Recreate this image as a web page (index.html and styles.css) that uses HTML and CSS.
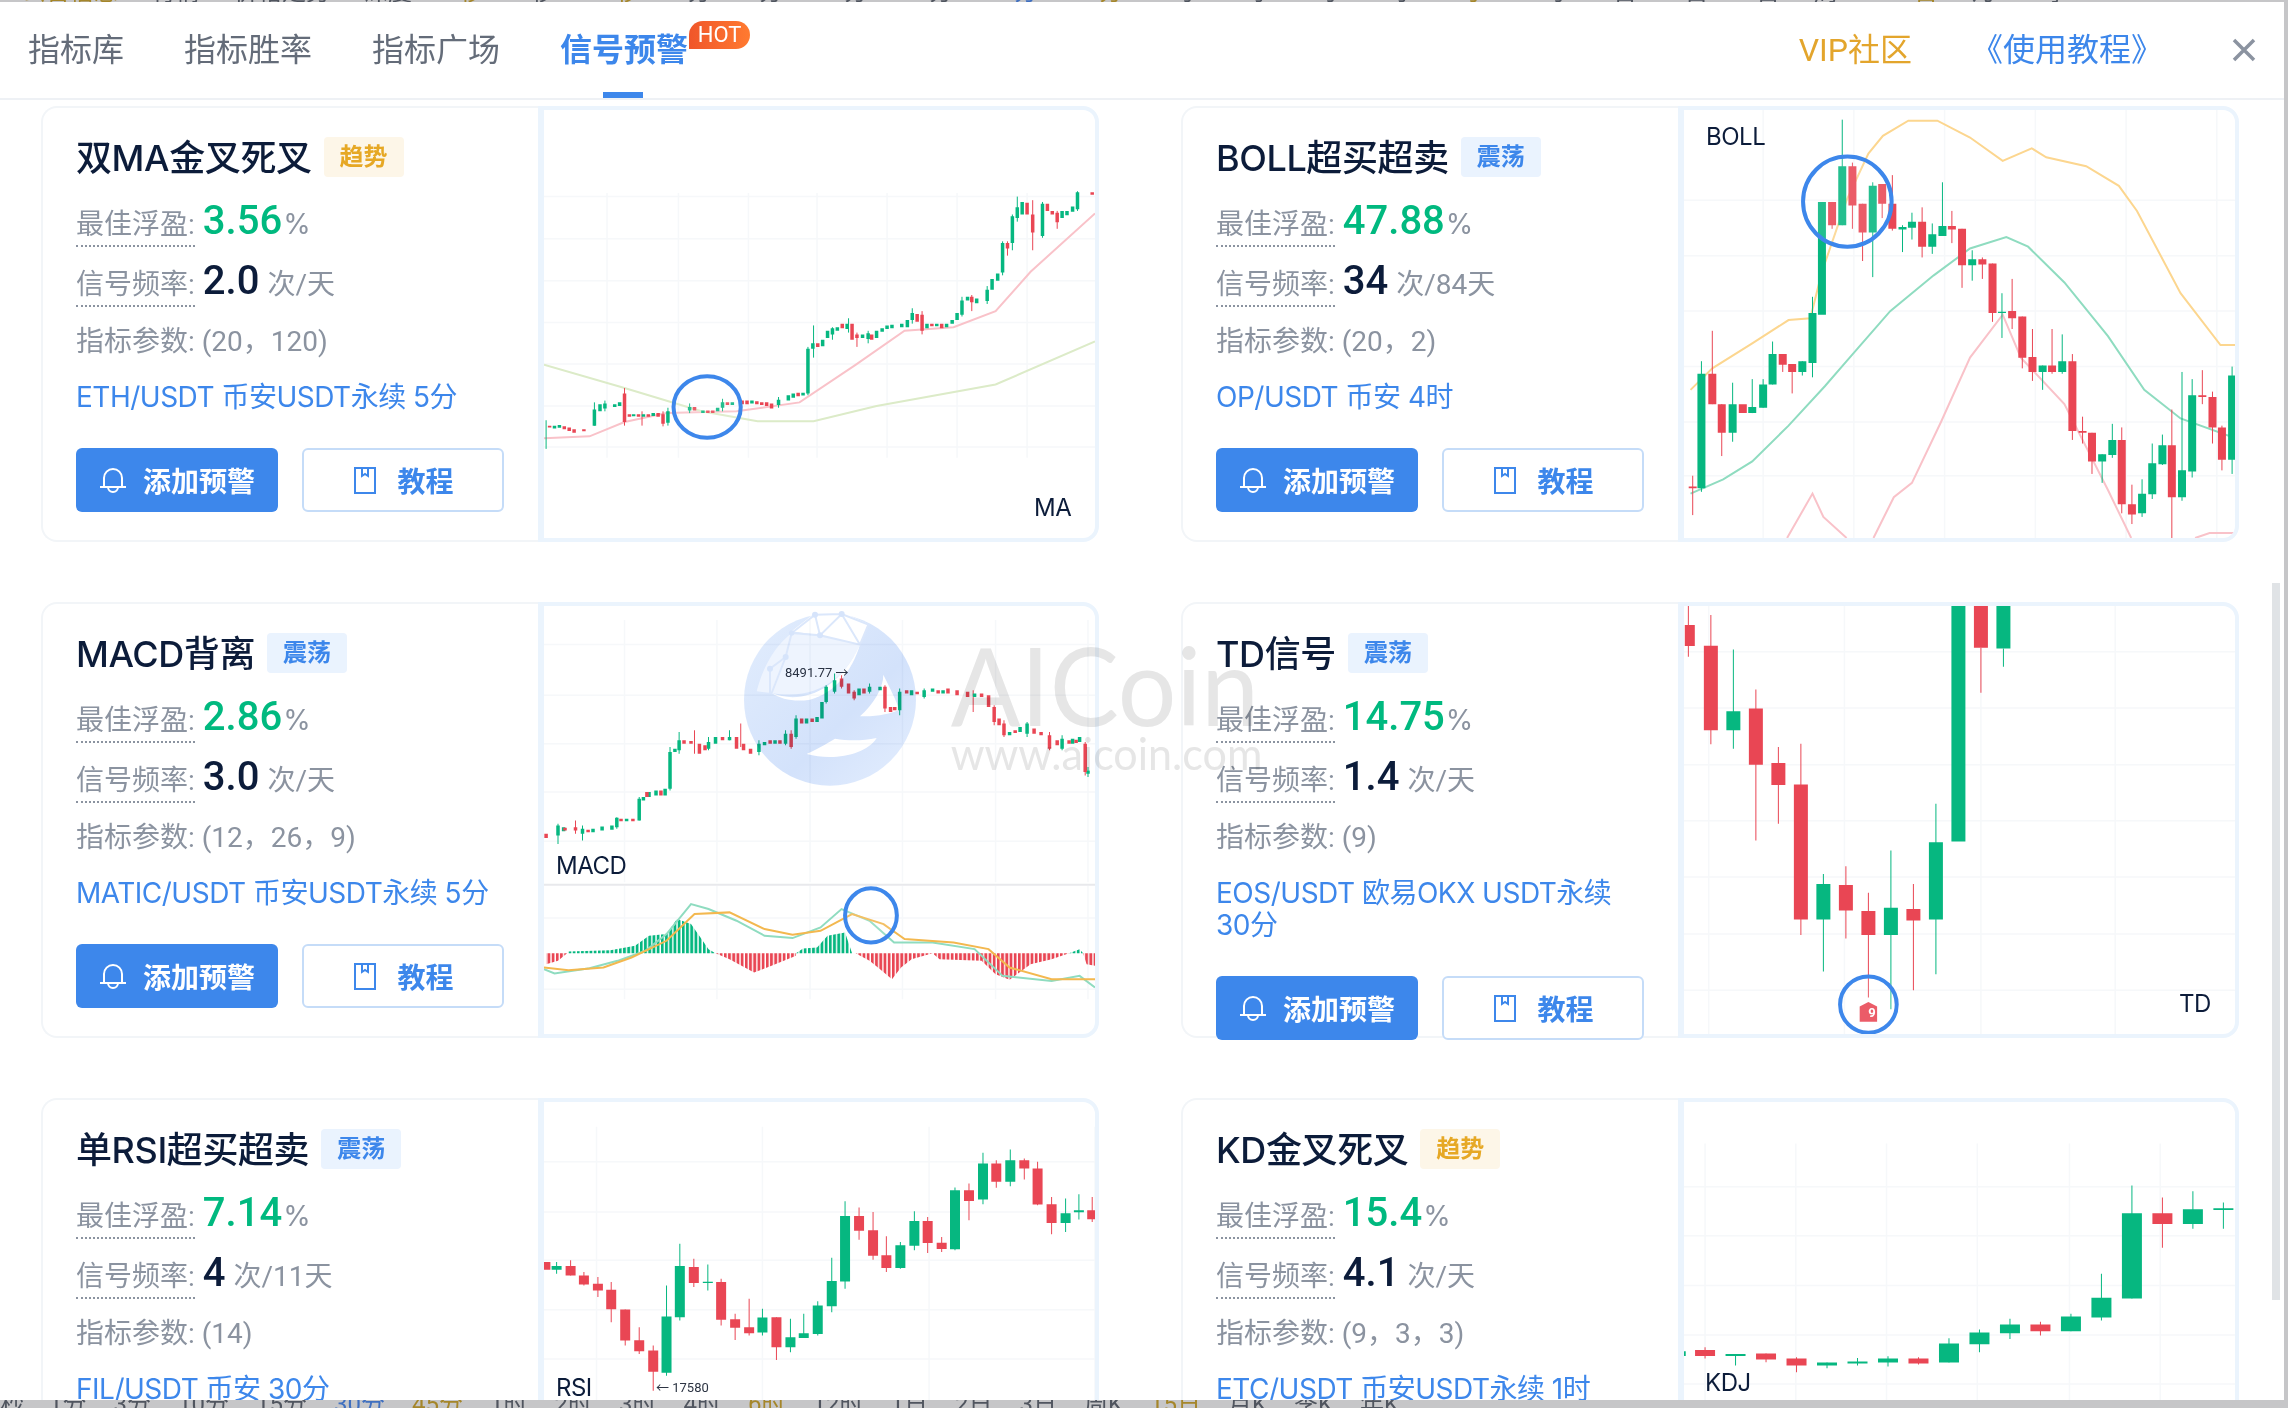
FILE: index.html
```html
<!DOCTYPE html>
<html lang="zh-CN">
<head>
<meta charset="utf-8">
<title>信号预警</title>
<link rel="stylesheet" href="styles.css">
</head>
<body>
<div class="strip-top">
  <span class="gold">公告信息</span><span>行情</span><span>价格走势</span><span>深度</span><span class="gold">1秒</span><span>5秒</span><span class="gold">30秒</span><span>1分</span><span>3分</span><span>10分</span><span>15分</span><span class="blue">30分</span><span class="gold">45分</span><span>1时</span><span>2时</span><span>3时</span><span>4时</span><span class="gold">6时</span><span>12时</span><span>1日</span><span>2日</span><span>3日</span><span>周K</span><span class="gold">15日</span><span>月K</span><span>季K</span>
</div>
<main class="modal">
  <header class="tabs">
    <a class="tab">指标库</a>
    <a class="tab">指标胜率</a>
    <a class="tab">指标广场</a>
    <a class="tab active">信号预警<span class="hot">HOT</span></a>
    <a class="head-link vip">VIP社区</a>
    <a class="head-link guide">《使用教程》</a>
    <svg class="close" viewBox="0 0 24 24"><path d="M2 2L22 22M22 2L2 22"/></svg>
  </header>
  <section class="cards">

    <article class="card">
      <div class="info">
        <div class="title-row"><h3>双MA金叉死叉</h3><span class="tag trend">趋势</span></div>
        <div class="stat"><span class="stat-label">最佳浮盈:</span><span class="val up-text">3.56</span><span class="unit">%</span></div>
        <div class="stat"><span class="stat-label">信号频率:</span><span class="val">2.0</span><span class="unit spaced">次/天</span></div>
        <div class="param">指标参数: (20，120)</div>
        <a class="pair">ETH/USDT 币安USDT永续 5分</a>
        <div class="actions">
          <button class="btn primary"><svg class="bell" viewBox="0 0 28 26"><path d="M5 19V11a9 9 0 0 1 18 0V19M1 20H27M9 20a5 5 0 0 0 10 0"/></svg>添加预警</button>
          <button class="btn ghost"><svg class="book" viewBox="0 0 22 27"><path d="M1 1H21V26H1ZM8 1V9L11 7L14 9V1"/></svg>教程</button>
        </div>
      </div>
      <div class="chart">
        <svg class="plot" viewBox="775 308 787 1196" preserveAspectRatio="none">
          <path class="grid" d="M775 550H1562M775 668H1562M775 785H1562M775 902H1562M775 1018H1562M775 1135H1562M775 1250H1562M865 540V1280M967 540V1280M1067 540V1280M1165 540V1280M1265 540V1280M1365 540V1280M1465 540V1280"/>
          <path class="ln pink" d="M775 1225L840 1220L890 1180L950 1155L1050 1150L1140 1125L1220 1020L1290 925L1360 915L1420 870L1470 760L1562 597"/>
          <path class="ln lime" d="M775 1020L890 1085L1000 1150L1080 1178L1160 1178L1250 1135L1420 1075L1562 955"/>
          <path class="up w1" d="M778 1175V1255M847 1125V1190M862 1120V1150M952 1140V1190M983 1128V1155M1030 1115V1150M1110 1110V1140M1152 970V1105M1160 910V1000M1187 915V950M1210 890V930M1238 925V960M1301 862V905M1372 830V885M1408 800V850M1430 675V770M1444 600V700M1451 550V620M1487 565V665M1537 535V590"/>
          <path class="down w1" d="M890 1085V1190M915 1150V1190M945 1150V1192M1222 930V970M1315 870V935M1386 825V870M1437 675V715M1473 560V700M1508 590V640"/>
          <path class="up b3" d="M790 1190V1198M797 1188V1196M847 1145V1190M855 1130V1150M862 1128V1142M876 1130V1138M883 1125V1135M903 1158V1164M917 1158V1165M931 1155V1163M952 1150V1182M983 1138V1148M1002 1148V1155M1023 1140V1150M1030 1125V1140M1044 1125V1132M1072 1120V1128M1110 1118V1132M1124 1105V1120M1131 1100V1112M1145 1098V1106M1152 975V1100M1159 960V975M1173 950V968M1180 925V945M1187 918V935M1194 915V925M1208 905V920M1230 935V945M1238 932V948M1250 925V945M1258 918V928M1265 910V920M1272 908V918M1286 905V915M1294 895V915M1301 875V895M1322 905V918M1336 905V912M1350 905V915M1358 895V905M1365 875V895M1372 840V880M1380 830V840M1393 835V848M1408 810V842M1415 780V810M1423 765V785M1430 680V762M1444 605V680M1451 580V610M1458 565V600M1487 570V660M1515 590V610M1522 590V602M1530 578V592M1537 538V585"/>
          <path class="down b3" d="M783 1190V1195M804 1192V1200M811 1195V1205M818 1200V1210M832 1200V1206M890 1100V1180M897 1158V1165M910 1158V1165M924 1158V1165M938 1155V1165M945 1158V1185M990 1138V1148M1009 1148V1155M1016 1148V1155M1037 1125V1132M1058 1120V1130M1065 1120V1130M1079 1122V1130M1086 1125V1132M1093 1125V1135M1100 1128V1142M1138 1098V1108M1166 960V970M1201 905V918M1215 905V950M1222 935V945M1243 935V950M1308 878V900M1315 880V925M1329 905V912M1343 905V918M1386 830V845M1437 680V695M1465 567V600M1473 600V650M1494 570V590M1501 590V600M1508 595V622M1558 538V545"/>
          <ellipse class="mark" cx="1008" cy="1138" rx="48" ry="86"/>
        </svg>
        <span class="chart-label lb-ma">MA</span>
      </div>
    </article>

    <article class="card">
      <div class="info">
        <div class="title-row"><h3>BOLL超买超卖</h3><span class="tag range">震荡</span></div>
        <div class="stat"><span class="stat-label">最佳浮盈:</span><span class="val up-text">47.88</span><span class="unit">%</span></div>
        <div class="stat"><span class="stat-label">信号频率:</span><span class="val">34</span><span class="unit spaced">次/84天</span></div>
        <div class="param">指标参数: (20，2)</div>
        <a class="pair">OP/USDT 币安 4时</a>
        <div class="actions">
          <button class="btn primary"><svg class="bell" viewBox="0 0 28 26"><path d="M5 19V11a9 9 0 0 1 18 0V19M1 20H27M9 20a5 5 0 0 0 10 0"/></svg>添加预警</button>
          <button class="btn ghost"><svg class="book" viewBox="0 0 22 27"><path d="M1 1H21V26H1ZM8 1V9L11 7L14 9V1"/></svg>教程</button>
        </div>
      </div>
      <div class="chart">
        <svg class="plot" viewBox="736 308 759 1196" preserveAspectRatio="none">
          <path class="grid" d="M736 560H1495M736 715H1495M736 870H1495M736 1025H1495M736 1180H1495M736 1330H1495M845 308V1504M970 308V1504M1095 308V1504M1220 308V1504M1345 308V1504M1470 308V1504"/>
          <path class="ln amber" d="M745 1090L775 1030L830 960L880 895L910 890L926 760L960 560L990 430L1010 380L1045 338L1085 338L1130 385L1175 450L1215 415L1235 440L1290 465L1335 520L1360 590L1420 820L1475 965L1495 965"/>
          <path class="ln teal" d="M745 1380L790 1340L830 1290L880 1190L930 1080L960 1010L1020 870L1080 770L1130 695L1180 663L1210 690L1260 790L1320 940L1370 1090L1420 1170L1495 1225"/>
          <path class="ln pink" d="M878 1504L913 1380L928 1445L960 1504M997 1504L1025 1390L1050 1350L1090 1180L1130 1000L1175 880L1200 1000L1260 1130L1320 1370L1352 1504M1440 1504L1460 1490L1495 1490"/>
          <path class="up w1" d="M760 1010V1375M803 1070V1235M830 1060V1155M845 1060V1140M858 955V1075M899 1010V1050M913 830V1055M954 335V630M996 510V775M1037 630V705M1050 595V670M1078 625V710M1092 510V660M1133 700V785M1174 820V945M1230 1022V1090M1257 935V1045M1312 1270V1350M1326 1185V1280M1367 1340V1445M1381 1240V1395M1395 1215V1300M1422 1040V1400M1436 1060V1335M1491 1025V1325"/>
          <path class="down w1" d="M748 1330V1440M775 925V1130M788 1130V1275M872 990V1040M885 1018V1100M940 565V640M968 455V640M982 570V730M1009 515V610M1023 490V645M1064 580V720M1105 590V680M1119 640V805M1147 720V780M1161 737V900M1188 780V920M1202 885V1030M1216 920V1065M1243 920V1045M1271 990V1230M1285 1165V1240M1298 1210V1325M1339 1195V1435M1353 1355V1465M1408 1145V1504M1450 1035V1130M1464 1095V1240M1477 1190V1315"/>
          <path class="up b8" d="M760 1045V1365M803 1130V1210M830 1138V1155M845 1075V1140M858 990V1075M899 1010V1040M913 875V1015M926 565V880M954 465V630M996 520V650M1037 635V642M1050 620V637M1078 655V690M1092 632V660M1133 725V742M1174 872V875M1230 1022V1040M1257 1010V1040M1312 1270V1290M1326 1230V1272M1367 1380V1435M1381 1295V1382M1395 1245V1298M1422 1315V1390M1436 1105V1318M1491 1050V1285"/>
          <path class="down b8" d="M748 1360V1365M775 1045V1130M788 1130V1210M817 1130V1155M872 990V1020M885 1018V1040M940 565V630M968 465V575M982 570V650M1009 515V570M1023 570V640M1064 620V690M1105 632V642M1119 640V742M1147 725V740M1161 737V875M1188 870V890M1202 885V1000M1216 998V1040M1243 1022V1040M1271 1010V1205M1285 1205V1210M1298 1210V1290M1339 1230V1410M1353 1410V1438M1408 1245V1390M1450 1105V1110M1464 1110V1195M1477 1195V1285"/>
          <ellipse class="mark" cx="961" cy="564" rx="61" ry="126"/>
        </svg>
        <span class="chart-label lb-boll">BOLL</span>
      </div>
    </article>

    <article class="card">
      <div class="info">
        <div class="title-row"><h3>MACD背离</h3><span class="tag range">震荡</span></div>
        <div class="stat"><span class="stat-label">最佳浮盈:</span><span class="val up-text">2.86</span><span class="unit">%</span></div>
        <div class="stat"><span class="stat-label">信号频率:</span><span class="val">3.0</span><span class="unit spaced">次/天</span></div>
        <div class="param">指标参数: (12，26，9)</div>
        <a class="pair">MATIC/USDT 币安USDT永续 5分</a>
        <div class="actions">
          <button class="btn primary"><svg class="bell" viewBox="0 0 28 26"><path d="M5 19V11a9 9 0 0 1 18 0V19M1 20H27M9 20a5 5 0 0 0 10 0"/></svg>添加预警</button>
          <button class="btn ghost"><svg class="book" viewBox="0 0 22 27"><path d="M1 1H21V26H1ZM8 1V9L11 7L14 9V1"/></svg>教程</button>
        </div>
      </div>
      <div class="chart">
        <svg class="plot" viewBox="775 78 787 1281" preserveAspectRatio="none">
          <defs>
            <pattern id="hatch-up" width="6" height="10" patternUnits="userSpaceOnUse"><rect class="bar-up" width="4" height="10"/></pattern>
            <pattern id="hatch-down" width="6" height="10" patternUnits="userSpaceOnUse"><rect class="bar-down" width="4" height="10"/></pattern>
          </defs>
          <path class="grid" d="M775 193H1562M775 345H1562M775 490H1562M775 635H1562M775 782H1562M775 1012H1562M775 1225H1562M890 120V905M1022 120V905M1155 120V905M1287 120V905M1420 120V905M1552 120V905M890 915V1255M1022 915V1255M1155 915V1255M1287 915V1255M1420 915V1255M1552 915V1255"/>
          <path class="sep" d="M775 912H1562"/>
          <path class="up w1" d="M795 730V790M830 735V780M879 710V745M911 650V720M955 500V630M968 455V520M1010 470V510M1040 450V480M1082 480V525M1120 450V495M1135 405V475M1178 315V370M1190 280V340M1240 310V340M1283 325V405M1318 325V355M1465 425V470M1515 465V510M1552 560V590"/>
          <path class="down w1" d="M820 720V760M1056 430V500M990 450V520M1128 450V505M1200 285V325M1218 330V360M1262 315V395M1388 330V395M1418 375V435M1432 420V470M1497 455V510M1548 485V585"/>
          <path class="up b3" d="M795 735V765M803 740V752M830 745V760M845 745V755M858 738V750M872 735V748M879 712V740M893 715V722M911 655V720M917 650V660M925 635V650M935 630V645M948 625V645M955 515V625M962 505V515M968 480V510M1010 485V505M1020 470V490M1040 470V480M1082 490V515M1090 485V495M1105 480V490M1120 460V490M1135 415V470M1150 415V430M1165 410V425M1172 365V415M1178 320V365M1190 300V335M1225 325V345M1240 320V335M1255 320V330M1283 335V390M1300 330V345M1318 330V350M1330 325V335M1345 330V340M1390 340V350M1440 455V465M1455 440V455M1465 430V460M1515 475V505M1530 475V490M1540 470V485M1552 570V580"/>
          <path class="down b3" d="M778 760V772M805 742V750M820 740V750M838 748V755M885 715V722M902 715V722M922 635V650M942 630V645M975 480V490M985 482V490M997 490V520M1005 495V510M1030 470V480M1050 470V505M1060 490V510M1070 505V520M1098 480V490M1112 480V490M1128 460V500M1143 415V430M1158 415V425M1200 295V320M1210 310V340M1218 335V355M1232 325V340M1262 320V385M1270 380V395M1276 380V390M1293 330V340M1308 335V342M1338 330V340M1352 325V340M1365 330V345M1380 335V350M1400 340V350M1410 345V380M1418 380V425M1425 415V435M1432 430V465M1448 450V458M1475 445V460M1485 455V465M1497 465V505M1508 480V495M1525 480V490M1535 478V488M1548 490V575"/>
          <path class="hist-up" d="M810 1117L810 1112L870 1108L905 1095L925 1065L950 1060L965 1015L985 1030L1000 1075L1010 1105L1020 1117ZM1135 1117L1145 1103L1165 1100L1180 1065L1205 1055L1215 1117ZM1525 1117L1540 1105L1545 1117Z"/>
          <path class="hist-down" d="M778 1117V1150L795 1140L808 1117ZM1020 1117L1040 1135L1075 1175L1100 1155L1135 1125V1117ZM1220 1117L1240 1140L1255 1165L1272 1195L1285 1160L1300 1135L1330 1117ZM1330 1117L1340 1135L1400 1140L1420 1180L1440 1197L1470 1150L1500 1135L1525 1117ZM1545 1117L1550 1150L1562 1155V1117Z"/>
          <path class="ln teal" d="M775 1165L790 1178L840 1162L880 1140L920 1110L950 1060L985 970L1010 985L1050 1020L1090 1065L1130 1072L1170 1040L1200 985L1240 1020L1275 1085L1330 1085L1390 1105L1430 1185L1500 1200L1540 1185L1562 1220"/>
          <path class="ln amber-strong" d="M775 1160L810 1168L860 1160L900 1130L950 1080L990 1000L1040 995L1090 1045L1130 1062L1170 1050L1215 1000L1260 1030L1290 1075L1360 1085L1410 1105L1440 1160L1500 1195L1562 1195"/>
          <ellipse class="mark" cx="1242" cy="1004" rx="37" ry="81"/>
        </svg>
        <span class="chart-label lb-macd">MACD</span>
        <span class="chart-note note-high">8491.77 →</span>
      </div>
    </article>

    <article class="card">
      <div class="info">
        <div class="title-row"><h3>TD信号</h3><span class="tag range">震荡</span></div>
        <div class="stat"><span class="stat-label">最佳浮盈:</span><span class="val up-text">14.75</span><span class="unit">%</span></div>
        <div class="stat"><span class="stat-label">信号频率:</span><span class="val">1.4</span><span class="unit spaced">次/天</span></div>
        <div class="param">指标参数: (9)</div>
        <a class="pair">EOS/USDT 欧易OKX USDT永续<br>30分</a>
        <div class="actions">
          <button class="btn primary"><svg class="bell" viewBox="0 0 28 26"><path d="M5 19V11a9 9 0 0 1 18 0V19M1 20H27M9 20a5 5 0 0 0 10 0"/></svg>添加预警</button>
          <button class="btn ghost"><svg class="book" viewBox="0 0 22 27"><path d="M1 1H21V26H1ZM8 1V9L11 7L14 9V1"/></svg>教程</button>
        </div>
      </div>
      <div class="chart">
        <svg class="plot" viewBox="736 78 759 1281" preserveAspectRatio="none">
          <path class="grid" d="M736 215H1495M736 383H1495M736 553H1495M736 721H1495M736 889H1495M736 1060H1495M736 1228H1495M770 78V1359M957 78V1359M1145 78V1359M1330 78V1359"/>
          <path class="up w1" d="M804 208V505M928 880V1172M1021 810V1285M1083 670V1180M1176 205V260"/>
          <path class="down w1" d="M742 78V230M773 105V492M835 328V780M866 500V730M897 490V1063M959 857V1073M990 936V1250M1052 910V1228M1145 203V338"/>
          <path class="up b14" d="M804 393V450M928 910V1016M1021 981V1063M1083 785V1016M1114 78V783M1176 78V205"/>
          <path class="down b14" d="M773 197V450M835 385V553M866 548V614M897 612V1016M959 913V989M990 991V1063M1052 985V1019M1145 78V203"/>
          <path class="down b10" d="M744 135V198"/>
          <path class="flag" d="M990 1263L1002 1277V1322H978V1277Z"/>
          <ellipse class="mark" cx="990" cy="1271" rx="39" ry="84"/>
        </svg>
        <span class="chart-label lb-td">TD</span>
        <span class="flag-num">9</span>
      </div>
    </article>

    <article class="card">
      <div class="info">
        <div class="title-row"><h3>单RSI超买超卖</h3><span class="tag range">震荡</span></div>
        <div class="stat"><span class="stat-label">最佳浮盈:</span><span class="val up-text">7.14</span><span class="unit">%</span></div>
        <div class="stat"><span class="stat-label">信号频率:</span><span class="val">4</span><span class="unit spaced">次/11天</span></div>
        <div class="param">指标参数: (14)</div>
        <a class="pair">FIL/USDT 币安 30分</a>
        <div class="actions">
          <button class="btn primary"><svg class="bell" viewBox="0 0 28 26"><path d="M5 19V11a9 9 0 0 1 18 0V19M1 20H27M9 20a5 5 0 0 0 10 0"/></svg>添加预警</button>
          <button class="btn ghost"><svg class="book" viewBox="0 0 22 27"><path d="M1 1H21V26H1ZM8 1V9L11 7L14 9V1"/></svg>教程</button>
        </div>
      </div>
      <div class="chart">
        <svg class="plot" viewBox="775 66 787 1281" preserveAspectRatio="none">
          <path class="grid" d="M775 245H1562M775 395H1562M775 540H1562M775 688H1562M775 835H1562M850 140V1347M1087 140V1347M1325 140V1347M1562 140V1347"/>
          <path class="up w1" d="M793 545V580M950 615V885M969 490V720M1009 552V630M1087 685V765M1127 715V815M1146 700V772M1166 662V765M1186 532V695M1205 363V625M1284 485V565M1304 393V510M1362 322V510M1402 218V372M1441 208V318M1520 355V455M1539 342V418"/>
          <path class="down w1" d="M813 540V585M832 575V615M852 590V650M871 605V725M891 687V795M911 740V820M931 795V930M989 535V620M1028 595V735M1048 700V778M1068 655V765M1107 710V838M1225 382V478M1245 395V538M1264 468V575M1323 410V518M1343 470V515M1382 310V420M1421 240V323M1461 235V298M1480 245V375M1500 350V462M1558 350V425"/>
          <path class="up b9" d="M793 557V568M950 708V876M969 557V710M1009 604V608M1087 711V756M1127 770V800M1146 758V772M1166 675V760M1186 602V677M1205 407V603M1284 495V563M1304 422V496M1362 330V507M1402 250V358M1441 240V305M1520 399V428M1539 390V396"/>
          <path class="down b9" d="M777 545V568M813 557V585M832 585V612M852 610V630M871 628V686M891 687V780M911 779V812M931 810V873M989 560V608M1028 605V718M1048 716V742M1068 740V758M1107 710V800M1225 407V451M1245 450V526M1264 525V563M1323 422V488M1343 487V506M1382 330V362M1421 250V305M1461 240V265M1480 265V373M1500 372V428M1558 390V417"/>
        </svg>
        <span class="chart-label lb-rsi">RSI</span>
        <span class="chart-note note-low">← 17580</span>
      </div>
    </article>

    <article class="card">
      <div class="info">
        <div class="title-row"><h3>KD金叉死叉</h3><span class="tag trend">趋势</span></div>
        <div class="stat"><span class="stat-label">最佳浮盈:</span><span class="val up-text">15.4</span><span class="unit">%</span></div>
        <div class="stat"><span class="stat-label">信号频率:</span><span class="val">4.1</span><span class="unit spaced">次/天</span></div>
        <div class="param">指标参数: (9，3，3)</div>
        <a class="pair">ETC/USDT 币安USDT永续 1时</a>
        <div class="actions">
          <button class="btn primary"><svg class="bell" viewBox="0 0 28 26"><path d="M5 19V11a9 9 0 0 1 18 0V19M1 20H27M9 20a5 5 0 0 0 10 0"/></svg>添加预警</button>
          <button class="btn ghost"><svg class="book" viewBox="0 0 22 27"><path d="M1 1H21V26H1ZM8 1V9L11 7L14 9V1"/></svg>教程</button>
        </div>
      </div>
      <div class="chart">
        <svg class="plot" viewBox="736 66 759 1281" preserveAspectRatio="none">
          <path class="grid" d="M736 320H1495M736 466H1495M736 615H1495M736 763H1495M736 910H1495M765 190V1347M890 190V1347M1015 190V1347M1140 190V1347M1267 190V1347M1392 190V1347"/>
          <path class="up w1" d="M807 820V855M933 846V863M975 832V855M1017 827V858M1101 773V846M1143 747V815M1185 715V775M1269 700V752M1311 580V720M1353 316V654M1437 333V445M1479 367V445"/>
          <path class="down w1" d="M765 800V834M849 819V845M891 830V875M1059 830V852M1227 724V765M1395 352V502"/>
          <path class="up b20" d="M807 820V826M933 846V855M975 843V849M1017 834V846M1101 789V846M1143 756V791M1185 732V758M1269 708V752M1311 652V711M1353 399V654M1437 387V431M1479 384V389"/>
          <path class="down b20" d="M765 808V826M849 819V837M891 834V855M1059 834V849M1227 732V752M1395 399V431"/>
          <path class="up w2" d="M737 812V826"/>
        </svg>
        <span class="chart-label lb-kdj">KDJ</span>
      </div>
    </article>

  </section>
  <svg class="watermark" viewBox="0 0 1680 600">
    <defs>
      <linearGradient id="wm-fill" x1="0" y1="0" x2="1" y2="1">
        <stop offset="0" stop-color="#e2edfd"/>
        <stop offset="0.6" stop-color="#d3e2fb"/>
        <stop offset="1" stop-color="#e4eefe"/>
      </linearGradient>
    </defs>
    <circle class="wm-ball" cx="330" cy="305" r="258"/>
    <path class="wm-light" d="M110 280C130 200 170 140 215 105L300 112L420 140C380 230 300 310 155 285Z"/>
    <path class="wm-white" d="M215 100L285 45L365 42L445 78L420 140L300 112Z"/>
    <path class="wm-white" d="M155 285C235 318 350 290 420 140C395 220 345 285 270 305C225 312 185 305 155 285Z"/>
    <path class="wm-white" d="M420 355C460 320 490 270 490 230C510 270 530 310 538 335C500 352 460 355 420 355Z"/>
    <path class="wm-white" d="M260 468C300 450 330 430 345 422C390 430 430 428 470 420C440 470 340 490 260 468Z"/>
    <path class="wm-net" d="M150 285L150 212L197 177L215 105L285 50L300 112L215 105M285 50L365 48L445 80L420 140L300 112L365 48L420 140M197 177L155 285"/>
    <circle class="wm-dot" cx="285" cy="50" r="9"/>
    <circle class="wm-dot" cx="365" cy="48" r="9"/>
    <circle class="wm-dot" cx="300" cy="112" r="9"/>
    <circle class="wm-dot" cx="215" cy="105" r="8"/>
    <circle class="wm-dot" cx="197" cy="177" r="9"/>
    <circle class="wm-dot" cx="150" cy="212" r="9"/>
    <text class="wm-brand" x="692" y="385" textLength="925" lengthAdjust="spacingAndGlyphs">AICoin</text>
    <text class="wm-site" x="692" y="515" textLength="935" lengthAdjust="spacingAndGlyphs">www.aicoin.com</text>
  </svg>
  <div class="scrollbar"></div>
</main>
<div class="strip-bottom">
  <span class="first">秒</span><span>1分</span><span>3分</span><span>10分</span><span>15分</span><span class="blue">30分</span><span class="gold">45分</span><span>1时</span><span>2时</span><span>3时</span><span>4时</span><span class="gold">6时</span><span>12时</span><span>1日</span><span>2日</span><span>3日</span><span>周K</span><span class="gold">15日</span><span>月K</span><span>季K</span><span>年K</span>
</div>
</body>
</html>
```

FILE: styles.css
```css
* { box-sizing: border-box; }
html, body { margin: 0; padding: 0; }
body {
  width: 2288px;
  height: 1408px;
  overflow: hidden;
  background: #c6c6c8;
  font-family: Roboto, "Noto Sans CJK SC", sans-serif;
}
.gold { color: #a5862a; }
.blue { color: #3f6fc0; }

.strip-top {
  height: 2px;
  width: 2284px;
  overflow: hidden;
  display: flex;
  align-items: flex-end;
  gap: 34px;
  padding-left: 22px;
  font-size: 24px;
  line-height: 20px;
  color: #50555f;
  white-space: nowrap;
}
.strip-bottom {
  height: 8px;
  width: 2284px;
  overflow: hidden;
  display: flex;
  gap: 27px;
  padding-left: 49px;
  position: relative;
  font-size: 24px;
  line-height: 24px;
  color: #50555f;
  white-space: nowrap;
}
.strip-bottom span { margin-top: -8px; }
.strip-bottom .first { position: absolute; left: 0; }

.modal {
  position: relative;
  width: 2284px;
  height: 1398px;
  background: #fff;
  overflow: hidden;
}

.tabs {
  height: 98px;
  border-bottom: 2px solid #eef1f5;
  display: flex;
  align-items: flex-start;
  gap: 60px;
  padding: 0 28px;
}
.tab {
  position: relative;
  height: 96px;
  line-height: 96px;
  font-size: 32px;
  color: #646c79;
}
.tab.active { color: #3d87eb; font-weight: 600; }
.tab.active::after {
  content: "";
  position: absolute;
  left: 43px;
  bottom: 0;
  width: 40px;
  height: 6px;
  background: #3d87eb;
}
.hot {
  position: absolute;
  left: 129px;
  top: 19px;
  width: 61px;
  height: 28px;
  border-radius: 14px 14px 14px 0;
  background: linear-gradient(90deg, #f0562a, #ff7a30);
  color: #fff;
  font-size: 22px;
  font-weight: 400;
  line-height: 28px;
  text-align: center;
}
.head-link {
  font-size: 32px;
  line-height: 96px;
}
.vip { margin-left: auto; color: #e3a52c; }
.guide { color: #3d87eb; margin-left: -1px; }
.close {
  width: 24px;
  height: 24px;
  margin: 36px 0 0 9px;
  flex: none;
}
.close path { fill: none; stroke: #8b93a0; stroke-width: 3.5; }

.cards {
  display: grid;
  grid-template-columns: 1058px 1058px;
  grid-auto-rows: 436px;
  column-gap: 82px;
  row-gap: 60px;
  padding: 6px 0 0 41px;
}
.card { display: flex; min-width: 0; }
.info {
  width: 497px;
  flex: none;
  height: 436px;
  padding: 29px 0 0 33px;
  border: 2px solid #f2f5f8;
  border-right: 0;
  border-radius: 16px 0 0 16px;
}
.title-row {
  display: flex;
  align-items: center;
  gap: 12px;
  height: 40px;
  margin-bottom: 15px;
}
h3 {
  margin: 0;
  padding-top: 1px;
  font-family: Inter, "Noto Sans CJK SC", sans-serif;
  font-size: 36px;
  font-weight: 500;
  letter-spacing: -0.4px;
  color: #0c1c3a;
  line-height: 40px;
  white-space: nowrap;
}
.tag {
  width: 80px;
  height: 40px;
  border-radius: 4px;
  text-align: center;
  font-size: 24px;
  line-height: 40px;
  font-weight: 600;
}
.trend { background: #fdf6e8; color: #e6a825; }
.range { background: #eaf3fe; color: #3d87eb; }

.stat {
  height: 60px;
  display: flex;
  align-items: baseline;
  padding-top: 9px;
  font-size: 28px;
  color: #8b93a0;
}
.stat-label {
  line-height: 40px;
  border-bottom: 2px dotted #8b93a0;
  margin-right: 8px;
}
.val {
  font-size: 40px;
  line-height: 40px;
  color: #0c1c3a;
  font-weight: 500;
}
.up-text { color: #00b97f; }
.unit { line-height: 40px; }
.up-text + .unit { font-family: Inter, sans-serif; margin-left: 1px; }
.spaced { margin-left: 8px; }
.param {
  height: 57px;
  line-height: 59px;
  font-size: 28px;
  color: #8b93a0;
  white-space: nowrap;
}
.pair {
  display: block;
  margin-top: 12px;
  font-family: Inter, "Noto Sans CJK SC", sans-serif;
  font-size: 28px;
  line-height: 32px;
  letter-spacing: -0.5px;
  color: #3d87eb;
  white-space: nowrap;
}
.actions {
  display: flex;
  gap: 24px;
  margin-top: 35px;
}
.btn {
  width: 202px;
  height: 64px;
  border-radius: 6px;
  display: flex;
  align-items: center;
  justify-content: center;
  padding: 0;
  font-family: inherit;
  font-size: 28px;
  font-weight: 600;
  flex: none;
}
.primary { background: #3d87eb; border: 0; color: #fff; gap: 16px; }
.ghost { background: #fff; border: 2px solid #c5dcf8; color: #3d87eb; gap: 21px; padding-left: 2px; }
.bell { width: 28px; height: 26px; }
.bell path { fill: none; stroke: #fff; stroke-width: 2; }
.book { width: 22px; height: 27px; }
.book path { fill: none; stroke: #3d87eb; stroke-width: 2; }

.chart {
  position: relative;
  flex: 1;
  height: 436px;
  border: 4px solid #ebf4fd;
  border-left-width: 6px;
  border-radius: 0 16px 16px 0;
  overflow: hidden;
}
.plot { display: block; width: 100%; height: 100%; }
.plot * { vector-effect: non-scaling-stroke; fill: none; }
.plot .bar-up { fill: #06b780; }
.plot .bar-down { fill: #e94654; }
.grid { stroke: #f6f8fa; stroke-width: 1.5; }
.sep { stroke: #e8e9ec; stroke-width: 2; }
.ln { stroke-width: 2; }
.pink { stroke: #f9c2c9; }
.lime { stroke: #dcebc8; }
.amber { stroke: #fcd68f; }
.amber-strong { stroke: #f3b84f; }
.teal { stroke: #8fdcc0; }
.up { stroke: #06b780; }
.down { stroke: #e94654; }
.w1 { stroke-width: 1; }
.w2 { stroke-width: 2; }
.b3 { stroke-width: 3.5; }
.b8 { stroke-width: 8; }
.b9 { stroke-width: 10; }
.b10 { stroke-width: 10; }
.b14 { stroke-width: 14; }
.b20 { stroke-width: 20; }
.plot .hist-up { fill: url(#hatch-up); }
.plot .hist-down { fill: url(#hatch-down); }
.plot .flag { fill: #e94654; }
.plot .mark { stroke: #3d87eb; stroke-width: 4; fill: rgba(255, 255, 255, 0.12); }

.chart-label {
  position: absolute;
  font-family: Inter, sans-serif;
  font-size: 24px;
  letter-spacing: -0.5px;
  line-height: 28px;
  color: #0c1c3a;
}
.lb-ma { left: 490px; bottom: 16px; }
.lb-boll { left: 22px; top: 13px; }
.lb-macd { left: 12px; top: 246px; }
.lb-td { left: 495px; top: 384px; }
.lb-rsi { left: 12px; top: 272px; }
.lb-kdj { left: 21px; top: 267px; }
.chart-note {
  position: absolute;
  font-size: 13px;
  line-height: 16px;
  color: #2c3443;
}
.note-high { left: 241px; top: 59px; }
.note-low { left: 112px; top: 278px; }
.flag-num {
  position: absolute;
  left: 180px;
  top: 400px;
  width: 16px;
  text-align: center;
  font-size: 13px;
  font-weight: 700;
  line-height: 14px;
  color: #fff;
}

.watermark {
  position: absolute;
  left: 720px;
  top: 596px;
  width: 560px;
  height: 200px;
  mix-blend-mode: multiply;
  pointer-events: none;
}
.wm-ball { fill: url(#wm-fill); }
.wm-light { fill: #eef4fe; }
.wm-white { fill: #fff; }
.wm-net { fill: none; stroke: #dbe7fb; stroke-width: 6; }
.wm-dot { fill: #d6e4fb; }
.wm-brand { font-family: Lato, sans-serif; font-size: 325px; fill: #e6e6e6; }
.wm-site { font-family: Lato, sans-serif; font-size: 135px; fill: #e6e6e6; }

.scrollbar {
  position: absolute;
  left: 2272px;
  top: 581px;
  width: 8px;
  height: 717px;
  background: #e0e3e6;
}
```
